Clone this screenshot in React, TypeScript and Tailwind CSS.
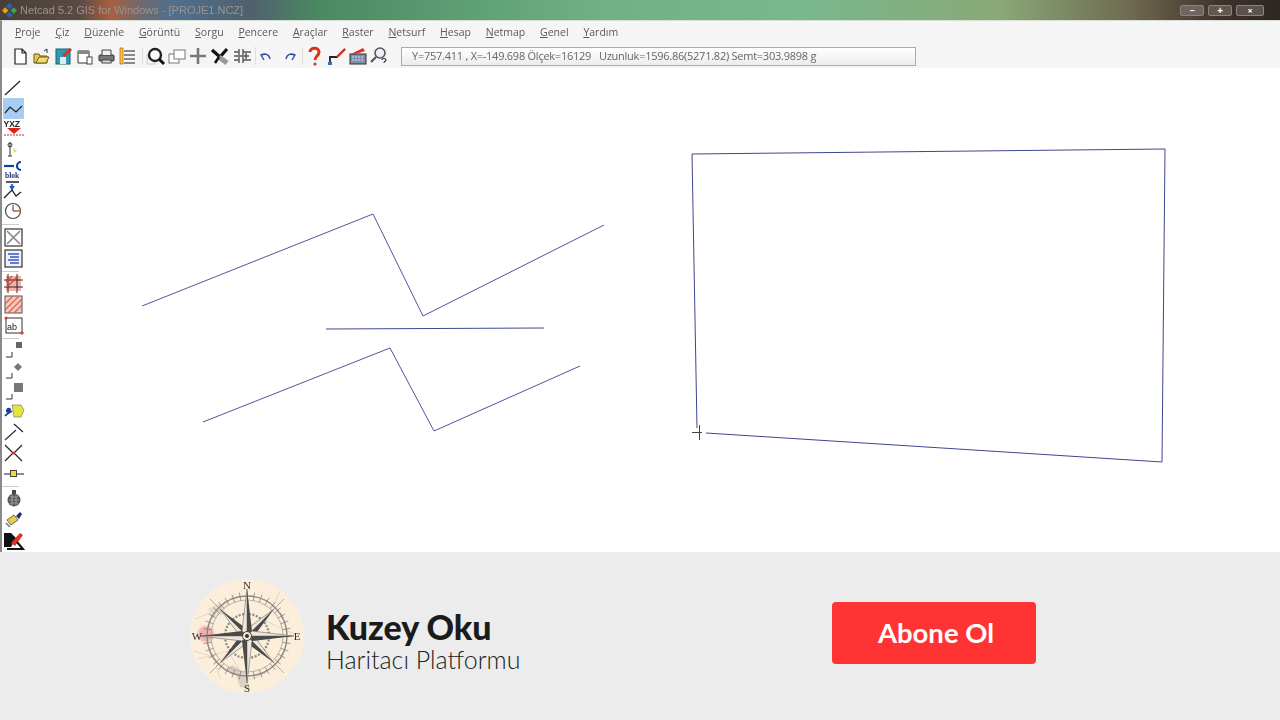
import type { ReactNode } from "react";

const menus = ["Proje", "Çiz", "Düzenle", "Görüntü", "Sorgu", "Pencere", "Araçlar", "Raster", "Netsurf", "Hesap", "Netmap", "Genel", "Yardım"];

const Ico = ({ children, w = 20, h = 20 }: { children: ReactNode; w?: number; h?: number }) => (
  <svg width={w} height={h} viewBox={`0 0 ${w} ${h}`} fill="none" className="shrink-0">
    {children}
  </svg>
);

const topIcons: { w: number; node?: ReactNode }[] = [
  { w: 21, node: <path d="M5 3h7l4 4v11H5z M12 3v4h4" stroke="#222" fill="#fff" strokeWidth="1.2" /> },
  { w: 22, node: <><path d="M3 8h5l1 2h7v7H3z" fill="#e8c84e" stroke="#6b5a14" /><path d="M5 17l3-6h10l-3 6z" fill="#f3dd78" stroke="#6b5a14" /><path d="M13 5l3-2v4" stroke="#333" /></> },
  { w: 21, node: <><rect x="3" y="3" width="14" height="15" fill="#2a9bb4" stroke="#1c5f6e" /><rect x="7" y="11" width="6" height="7" fill="#d8eef2" /><path d="M9 9l8-7 2 2-7 7z" fill="#d9342a" /></> },
  { w: 22, node: <><path d="M4 5h11v12H4z" stroke="#333" fill="#fff" /><path d="M4 5h11v3H4z" fill="#888" /><rect x="13" y="11" width="5" height="7" fill="#fff" stroke="#444" /></> },
  { w: 21, node: <><rect x="3" y="9" width="15" height="6" rx="1" fill="#777" stroke="#333" /><path d="M6 9V4h9v5" fill="#eee" stroke="#444" /><rect x="6" y="14" width="9" height="3" fill="#ddd" stroke="#444" /></> },
  { w: 21, node: <><path d="M7 5h11M7 9h11M7 13h11M7 17h11" stroke="#666" strokeWidth="1.6" /><rect x="3" y="2" width="3" height="16" fill="#f2d32c" stroke="#b33" strokeWidth=".6" /></> },
  { w: 8 },
  { w: 21, node: <><rect x="1" y="9" width="8" height="9" stroke="#ccc" /><circle cx="9" cy="9" r="6" stroke="#222" strokeWidth="2.4" fill="#fff" fillOpacity=".8" /><path d="M13 13l5 5" stroke="#111" strokeWidth="3" /></> },
  { w: 21, node: <><rect x="2" y="8" width="10" height="9" stroke="#777" fill="#fff" /><rect x="7" y="4" width="11" height="9" stroke="#777" fill="#fff" /></> },
  { w: 21, node: <path d="M10 2v16M2 10h16" stroke="#777" strokeWidth="2.6" /> },
  { w: 22, node: <><path d="M3 4l8 7 7-8" stroke="#111" strokeWidth="3.2" /><path d="M10 11l8 6" stroke="#999" strokeWidth="5" /><path d="M10 11l-4 6" stroke="#111" strokeWidth="2.6" /></> },
  { w: 23, node: <path d="M3 6h5M12 6h8M3 10h15M3 14h5M12 14h8M8 3v6M12 3v6M15 7v6M8 11v6M12 11v6" stroke="#555" strokeWidth="1.4" /> },
  { w: 2 },
  { w: 21, node: <path d="M8 14l-3-5 5-1M5 9c4-2 8-1 9 4" stroke="#2d4fa8" strokeWidth="1.4" /> },
  { w: 23, node: <path d="M15 14l3-5-5-1M18 9c-4-2-8-1-9 4" stroke="#2d4fa8" strokeWidth="1.4" /> },
  { w: 4 },
  { w: 22, node: <><path d="M6 6c0-5 9-5 9 0 0 4-4 4-4 8" stroke="#e0301e" strokeWidth="3" /><circle cx="11" cy="18" r="1.6" fill="#e0301e" /></> },
  { w: 22, node: <><path d="M4 17v-6h7l8-8" stroke="#222" strokeWidth="1.8" /><path d="M11 11l8-8" stroke="#d9342a" strokeWidth="2" /><rect x="2" y="16" width="4" height="3" fill="#2d6fc2" /></> },
  { w: 21, node: <><rect x="2" y="8" width="16" height="10" fill="#7f8fa8" stroke="#333" /><path d="M4 11h12M4 14h12" stroke="#dde" strokeDasharray="2 1" /><path d="M3 8l12-6 2 3-9 3z" fill="#d9342a" /></> },
  { w: 20, node: <><circle cx="11" cy="7" r="5" fill="#eef" stroke="#555" strokeWidth="1.6" /><path d="M7 11l-5 5" stroke="#555" strokeWidth="2.2" /><path d="M13 14c0-2 4-2 4 0 0 1-2 1-2 3" stroke="#333" strokeWidth="1.2" /></> },
];

const Divider = () => <div className="my-[2px] h-px w-[17px] bg-[#ccc]" />;

const sideIcons: { h: number; node?: ReactNode; active?: boolean }[] = [
  { h: 20, node: <path d="M4 17L19 3" stroke="#222" strokeWidth="1.2" /> },
  { h: 21, active: true, node: <path d="M2 15l5-6 6 5 6-6" stroke="#222" strokeWidth="1.2" /> },
  { h: 20, node: <><text x="2.500" y="8" fontSize="8.5" fontWeight="700" fontFamily="Liberation Sans" fill="#222">YXZ</text><path d="M6 9h14l-7 6z" fill="#e0201c" /><path d="M3 16h20" stroke="#b03020" strokeDasharray="2 1" /></> },
  { h: 21, node: <><path d="M9 3v14M7 17h4" stroke="#333" /><circle cx="9" cy="6" r="2" stroke="#333" /><path d="M12 9l4 3-3 2z" fill="#dfe04a" /></> },
  { h: 21, node: <><path d="M3 6h10" stroke="#0b3fa8" strokeWidth="2.2" /><path d="M20 2a4 4 0 1 0 0 8" stroke="#0b3fa8" strokeWidth="2.2" /><text x="4" y="18" fontSize="7.5" fontWeight="700" fontFamily="Liberation Serif" fill="#26307f">blok</text></> },
  { h: 20, node: <><path d="M5 1h13" stroke="#111" strokeWidth="1.4" /><path d="M11 3v3M9 5l2 3 2-3" stroke="#1d4fd0" strokeWidth="1.6" /><path d="M3 17l8-8 4 6 5-4" stroke="#222" strokeWidth="1.3" /></> },
  { h: 20, node: <><circle cx="12" cy="10" r="7.500" stroke="#444" strokeWidth="1.2" /><path d="M12 4v6" stroke="#333" /><path d="M12 10h8" stroke="#d24a3c" strokeWidth="1.4" /></> },
  { h: 6 },
  { h: 21, node: <><rect x="4" y="2" width="17" height="17" stroke="#333" strokeWidth="1.2" /><path d="M6 4l13 13M19 4L6 17" stroke="#888" strokeWidth="1.6" /></> },
  { h: 21, node: <><rect x="4" y="2" width="17" height="17" stroke="#333" strokeWidth="1.2" fill="#eef2fb" /><path d="M7 6h11M9 9h9M7 12h11M9 15h9" stroke="#3a55c8" strokeWidth="1.5" /></> },
  { h: 4 },
  { h: 21, node: <><rect x="5" y="3" width="15" height="15" fill="#f2b0a6" /><path d="M3 7h19M3 14h19M7 1v19M16 1v19" stroke="#2a2a2a" strokeWidth="1" /><path d="M5 9l6-6M5 15l12-12" stroke="#d94436" strokeWidth="1.2" /></> },
  { h: 21, node: <><rect x="4" y="2" width="17" height="17" fill="#f5c9bf" stroke="#555" /><path d="M4 10l8-8M4 16l14-14M7 19l14-14M13 19l8-8" stroke="#d9604f" strokeWidth="1.2" /></> },
  { h: 21, node: <><rect x="5" y="3" width="16" height="15" stroke="#333" fill="#fff" /><text x="6" y="15" fontSize="9" fontFamily="Liberation Sans" fill="#222">ab</text><circle cx="5" cy="3" r="1.500" fill="#e0301e" /><path d="M19 18h4M21 16v4" stroke="#e0301e" /></> },
  { h: 4 },
  { h: 21, node: <><rect x="15" y="2" width="6" height="6" fill="#666" /><path d="M5 17h6v-5" stroke="#333" /></> },
  { h: 21, node: <><path d="M17 2l4 4-4 4-4-4z" fill="#777" /><path d="M5 17h6v-5" stroke="#333" /></> },
  { h: 20, node: <><rect x="13" y="1" width="9" height="9" fill="#777" /><path d="M5 17h6v-5" stroke="#333" /></> },
  { h: 19, node: <><path d="M5 9c0-4 5-4 5-1 0 3-5 4-5 1z" fill="#1f35a8" /><path d="M11 3h9l3 5-3 7h-7z" fill="#e8e53a" stroke="#667" strokeWidth=".6" /><path d="M4 14c2-3 5-3 7-5" stroke="#1f35a8" strokeWidth="1.6" /></> },
  { h: 21, node: <><path d="M4 19L15 9" stroke="#333" strokeWidth="1.2" /><path d="M13 3l9 8" stroke="#222" strokeWidth="1.2" /></> },
  { h: 21, node: <><path d="M4 3l8 8-8 8M21 3l-8 8 8 8" stroke="#222" strokeWidth="1.2" /><circle cx="12.500" cy="11" r="1.500" fill="#e0301e" /></> },
  { h: 21, node: <><path d="M3 11h20" stroke="#444" strokeWidth="1.2" /><rect x="9.500" y="7.500" width="6" height="6" fill="#f2dc34" stroke="#444" /></> },
  { h: 4 },
  { h: 21, node: <><circle cx="13" cy="12" r="6.500" fill="#555" /><path d="M9 9h8M8 12h10M9 15h8M11 6v12M15 6v12" stroke="#aaa" strokeWidth=".8" /><rect x="11" y="2" width="4" height="4" fill="#444" /></> },
  { h: 21, node: <><path d="M6 11l7-5 4 5-7 5z" fill="#e8cf4a" stroke="#665" /><path d="M15 7l4-4 2 2-3 5z" fill="#20306e" /><path d="M5 14l4 4" stroke="#777" strokeWidth="1.6" /></> },
  { h: 21, node: <><path d="M3 3h7l5 5-5 9H3z" fill="#111" /><path d="M10 13l9-10 3 2-8 11z" fill="#e0301e" /><path d="M6 19h16l-6-7" stroke="#111" strokeWidth="2" /></> },
];

const Compass = () => {
  const ticks = Array.from({ length: 36 }, (_, i) => (i * Math.PI) / 18);
  const star = (deg: number, len: number, wid: number) => (
    <g key={`${deg}-${len}`} transform={`rotate(${deg} 57 57)`}>
      <path d={`M57 ${57 - len}L${57 - wid} ${57 - wid}L57 57z`} fill="#efe6d8" stroke="#555" strokeWidth=".5" />
      <path d={`M57 ${57 - len}L${57 + wid} ${57 - wid}L57 57z`} fill="#4a4a4a" />
    </g>
  );
  return (
    <svg width="114" height="114" viewBox="0 0 114 114" className="shrink-0 blur-[0.3px]">
      <circle cx="57" cy="57" r="57" fill="#fbeedb" />
      <circle cx="16" cy="55" r="8" fill="#eeb0ae" className="blur-[1px]" />
      <path d="M5 40l30-12 10-14M8 80l30-8 18 30 20-8M90 12l-14 30 30 14M30 100l-6-22-20-6" stroke="#ddd2c0" strokeWidth=".8" fill="none" />
      <path d="M36 90l10 6 4 12 10 2-4-16-14-8z" fill="#dcd1c2" />
      <path d="M18 30l12-6 6 10-12 4z" fill="#e6dbca" />
      <circle cx="57" cy="57" r="40" stroke="#8a8a82" strokeWidth="1.4" fill="none" />
      <circle cx="57" cy="57" r="36" stroke="#a8a59c" strokeWidth=".8" fill="none" />
      <circle cx="57" cy="57" r="22" stroke="#8a8a82" strokeWidth="2.2" strokeDasharray="2 1.5" fill="none" />
      {ticks.map((a) => (
        <line key={a} x1={57 + 36 * Math.cos(a)} y1={57 + 36 * Math.sin(a)} x2={57 + 44 * Math.cos(a)} y2={57 + 44 * Math.sin(a)} stroke="#777" strokeWidth=".7" />
      ))}
      <path d="M20 20L94 94M94 20L20 94" stroke="#8a8172" strokeWidth=".6" />
      {[45, 135, 225, 315].map((d) => star(d, 38, 5))}
      {[0, 90, 180, 270].map((d) => star(d, 47, 5))}
      <circle cx="57" cy="57" r="4.500" fill="#f4ead8" stroke="#444" />
      <circle cx="57" cy="57" r="2" fill="#333" />
      <g fontFamily="Liberation Serif" fontSize="11" fill="#2e2e2e" textAnchor="middle">
        <text x="57" y="10">N</text>
        <text x="107" y="61">E</text>
        <text x="57" y="113">S</text>
        <text x="7" y="61">W</text>
      </g>
    </svg>
  );
};

export default function App() {
  return (
    <div className="flex h-[720px] w-[1280px] flex-col overflow-hidden bg-white font-['Open_Sans',sans-serif]">
      <div className="flex h-[20px] shrink-0 items-center justify-between bg-[linear-gradient(90deg,#4a3e38_0px,#5a4a45_80px,#a8603f_110px,#6a6a72_145px,#4f6f8f_175px,#50606c_250px,#4a8a62_320px,#6fb184_600px,#78b88c_800px,#8aa878_1000px,#6f6a50_1130px,#3f322c_1220px,#2e2622_1280px)] pl-[2px] pr-[16px]">
        <div className="flex items-center gap-[3px] blur-[0.4px]">
          <svg width="15" height="15" viewBox="0 0 14 14">
            <path d="M0 7l3-3 3 3-3 3z" fill="#e8a020" />
            <path d="M8 7l3-3 3 3-3 3z" fill="#3fa050" />
            <path d="M7 0l3 3-3 3-3-3z" fill="#2d5fb0" />
            <path d="M7 8l3 3-3 3-3-3z" fill="#2d5fb0" />
          </svg>
          <span className="font-['Liberation_Sans',sans-serif] text-[11px] text-[#9a9490]">Netcad 5.2 GIS for Windows - [PROJE1.NCZ]</span>
        </div>
        <div className="flex items-center gap-[4px]">
          <div className="flex h-[11px] w-[24px] items-center justify-center rounded-[2px] border border-[#8a8580] bg-[#6d6660] text-[9px] font-bold leading-none text-white">−</div>
          <div className="flex h-[11px] w-[24px] items-center justify-center rounded-[2px] border border-[#8a8580] bg-[#5f5852] text-[10px] font-bold leading-none text-white">+</div>
          <div className="flex h-[11px] w-[28px] items-center justify-center rounded-[2px] border border-[#8a8580] bg-[#5a524c] text-[9px] font-bold leading-none text-white">×</div>
        </div>
      </div>

      <div className="flex h-[24px] shrink-0 items-center gap-[14.8px] border-t border-[#d8e0d8] border-l-2 border-l-[#8a8a8a] bg-[#f5f5f5] pl-[13px] text-[10.5px] text-[#5a5a5a] blur-[0.25px]">
        {menus.map((m) => (
          <span key={m}>
            <span className="underline">{m[0]}</span>
            {m.slice(1)}
          </span>
        ))}
      </div>

      <div className="flex h-[24px] shrink-0 items-center border-l-2 border-l-[#8a8a8a] bg-[#f5f5f5] pl-[8px]">
        {topIcons.map((ic, i) => (
          <div key={i} className="flex items-center justify-center blur-[0.3px]" style={{ width: ic.w }}>
            {ic.node ? <Ico w={ic.w}>{ic.node}</Ico> : <div className="h-[18px] w-px bg-[#ddd]" />}
          </div>
        ))}
        <div className="ml-[12px] flex h-[19px] w-[515px] items-center border border-[#aaa] bg-[linear-gradient(#fff,#ececec)] pl-[10px] text-[11px] tracking-[-0.25px] whitespace-pre text-[#666] blur-[0.2px]">
          Y=757.411 , X=-149.698 Ölçek=16129   Uzunluk=1596.86(5271.82) Semt=303.9898 g
        </div>
      </div>

      <div className="flex h-[484px] shrink-0">
        <div className="flex w-[26px] shrink-0 flex-col border-l-2 border-l-[#8a8a8a] pt-[10px]">
          {sideIcons.map((ic, i) =>
            ic.node ? (
              <div key={i} className={ic.active ? "ml-px mr-[2px] bg-[#a9cdf2] blur-[0.25px]" : "-ml-px blur-[0.25px]"} style={{ height: ic.h }}>
                <Ico w={ic.active ? 21 : 24} h={ic.h}>{ic.node}</Ico>
              </div>
            ) : (
              <div key={i} style={{ height: ic.h }} className="flex items-center">
                <Divider />
              </div>
            ),
          )}
        </div>
        <svg viewBox="26 68 1254 484" className="h-[484px] w-[1254px]" fill="none" stroke="#4f559f" strokeWidth="1">
          <polyline points="142,306 373,214 423,316 604,225" />
          <polyline points="326,329 544,328" stroke="#3f4a90" />
          <polyline points="203,422 390,348 434,431 580,366" />
          <polyline points="706,433 1162,462 1165,149 692,154 697,428" stroke="#3f4590" />
          <path d="M692 432.500h10M699.500 425v15" stroke="#444" />
        </svg>
      </div>

      <div className="flex flex-1 items-center bg-[#ececec] pl-[190px]">
        <Compass />
        <div className="ml-[22px] mt-[9px] flex w-[506px] flex-col font-['Lato',sans-serif] text-[#1b1b1b]">
          <span className="text-[34px] leading-[36px] font-black">Kuzey Oku</span>
          <span className="text-[25px] leading-[28px] font-light text-[#222]">Haritacı Platformu</span>
        </div>
        <button className="mb-[6px] h-[62px] w-[204px] rounded-[4px] bg-[#ff3333] pl-[4px] font-['Lato',sans-serif] text-[27.5px] font-bold text-white">
          Abone Ol
        </button>
      </div>
    </div>
  );
}
